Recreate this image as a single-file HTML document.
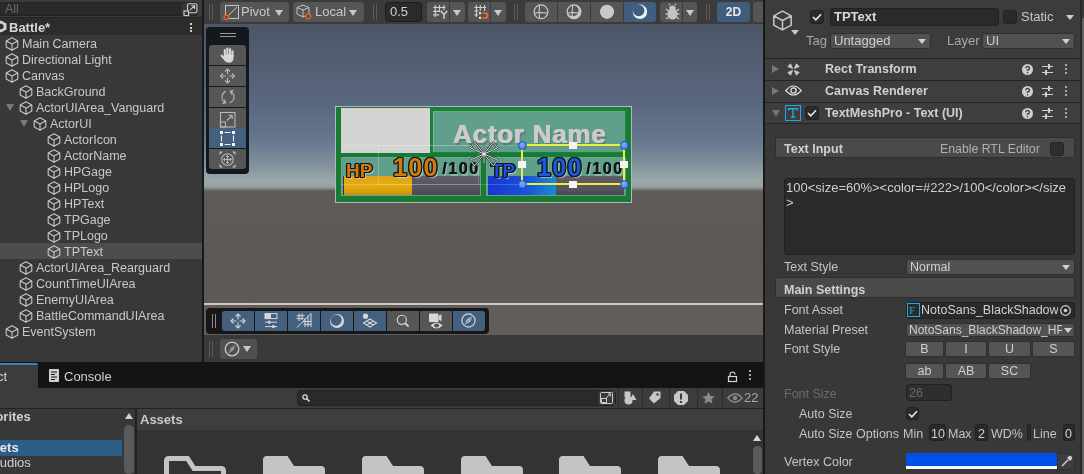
<!DOCTYPE html>
<html><head><meta charset="utf-8">
<style>
*{margin:0;padding:0;box-sizing:border-box}
html,body{width:1084px;height:474px;overflow:hidden;background:#191919;font-family:"Liberation Sans",sans-serif;color:#d2d2d2;position:relative}
.a{position:absolute}
.t{position:absolute;white-space:nowrap;font-size:12.5px;line-height:16px;will-change:transform}
svg{position:absolute;overflow:visible}
</style></head><body>
<div class="a" style="left:0px;top:0px;width:202px;height:362px;background:#383838;"></div>
<div class="a" style="left:0px;top:0px;width:202px;height:18px;background:#3c3c3c;"></div>
<div class="a" style="left:-6px;top:2px;width:187px;height:14px;background:#2a2a2a;border:1px solid #232323"></div>
<div class="t" style="left:5px;top:0px;line-height:18px;color:#6a6a6a;font-size:12.5px">All</div>
<div class="a" style="left:181px;top:2px;width:17px;height:14px;background:#363636;border-radius:0 4px 4px 0;border:1px solid #262626;border-left:none"></div>
<svg style="left:183px;top:2.5px" width="15" height="13" viewBox="0 0 15 13"><rect x="4.5" y="0.8" width="9.5" height="9" rx="1.5" fill="none" stroke="#d0d0d0" stroke-width="1.1"/><rect x="1" y="8" width="4.6" height="4.6" fill="#363636" stroke="#d0d0d0" stroke-width="1.1"/><path d="M6.8 7.2 L11.6 2.8 M8.4 2.8 H11.6 V6" fill="none" stroke="#d0d0d0" stroke-width="1.1"/></svg>
<div class="a" style="left:0px;top:17px;width:202px;height:1px;background:#232323;"></div>
<div class="a" style="left:0px;top:18px;width:202px;height:17px;background:#2c2c2c;"></div>
<svg style="left:-5px;top:20px" width="12" height="13" viewBox="0 0 12 13"><path d="M6 0.5 L11.5 3.5 V9.5 L6 12.5 L0.5 9.5 V3.5 Z" fill="#d0d0d0"/><path d="M6 3.5 L8.5 5 V8 L6 9.5 L3.5 8 V5 Z" fill="#2e2e2e"/></svg>
<div class="t" style="left:9px;top:19px;line-height:18px;font-weight:bold;font-size:13px;color:#d6d6d6">Battle*</div>
<div class="a" style="left:189.5px;top:23.0px;width:2px;height:2px;background:#d0d0d0;"></div>
<div class="a" style="left:189.5px;top:26.6px;width:2px;height:2px;background:#d0d0d0;"></div>
<div class="a" style="left:189.5px;top:30.2px;width:2px;height:2px;background:#d0d0d0;"></div>
<svg style="left:5px;top:37px" width="14" height="14" viewBox="0 0 14 14"><path d="M7 0.8 L12.8 3.9 V10.1 L7 13.2 L1.2 10.1 V3.9 Z M1.2 3.9 L7 7 L12.8 3.9 M7 7 V13.2" fill="none" stroke="#c6c6c6" stroke-width="1.1" stroke-linejoin="round"/></svg>
<div class="t" style="left:22px;top:36px;line-height:16px;font-size:12.5px;color:#c8c8c8">Main Camera</div>
<svg style="left:5px;top:53px" width="14" height="14" viewBox="0 0 14 14"><path d="M7 0.8 L12.8 3.9 V10.1 L7 13.2 L1.2 10.1 V3.9 Z M1.2 3.9 L7 7 L12.8 3.9 M7 7 V13.2" fill="none" stroke="#c6c6c6" stroke-width="1.1" stroke-linejoin="round"/></svg>
<div class="t" style="left:22px;top:52px;line-height:16px;font-size:12.5px;color:#c8c8c8">Directional Light</div>
<svg style="left:5px;top:69px" width="14" height="14" viewBox="0 0 14 14"><path d="M7 0.8 L12.8 3.9 V10.1 L7 13.2 L1.2 10.1 V3.9 Z M1.2 3.9 L7 7 L12.8 3.9 M7 7 V13.2" fill="none" stroke="#c6c6c6" stroke-width="1.1" stroke-linejoin="round"/></svg>
<svg style="left:-8px;top:72px" width="8" height="7" viewBox="0 0 8 7"><path d="M0 0 H8 L4.0 7 Z" fill="#7a7a7a"/></svg>
<div class="t" style="left:22px;top:68px;line-height:16px;font-size:12.5px;color:#c8c8c8">Canvas</div>
<svg style="left:19px;top:85px" width="14" height="14" viewBox="0 0 14 14"><path d="M7 0.8 L12.8 3.9 V10.1 L7 13.2 L1.2 10.1 V3.9 Z M1.2 3.9 L7 7 L12.8 3.9 M7 7 V13.2" fill="none" stroke="#c6c6c6" stroke-width="1.1" stroke-linejoin="round"/></svg>
<div class="t" style="left:36px;top:84px;line-height:16px;font-size:12.5px;color:#c8c8c8">BackGround</div>
<svg style="left:19px;top:101px" width="14" height="14" viewBox="0 0 14 14"><path d="M7 0.8 L12.8 3.9 V10.1 L7 13.2 L1.2 10.1 V3.9 Z M1.2 3.9 L7 7 L12.8 3.9 M7 7 V13.2" fill="none" stroke="#c6c6c6" stroke-width="1.1" stroke-linejoin="round"/></svg>
<svg style="left:6px;top:104px" width="8" height="7" viewBox="0 0 8 7"><path d="M0 0 H8 L4.0 7 Z" fill="#7a7a7a"/></svg>
<div class="t" style="left:36px;top:100px;line-height:16px;font-size:12.5px;color:#c8c8c8">ActorUIArea_Vanguard</div>
<svg style="left:33px;top:117px" width="14" height="14" viewBox="0 0 14 14"><path d="M7 0.8 L12.8 3.9 V10.1 L7 13.2 L1.2 10.1 V3.9 Z M1.2 3.9 L7 7 L12.8 3.9 M7 7 V13.2" fill="none" stroke="#c6c6c6" stroke-width="1.1" stroke-linejoin="round"/></svg>
<svg style="left:20px;top:120px" width="8" height="7" viewBox="0 0 8 7"><path d="M0 0 H8 L4.0 7 Z" fill="#7a7a7a"/></svg>
<div class="t" style="left:50px;top:116px;line-height:16px;font-size:12.5px;color:#c8c8c8">ActorUI</div>
<svg style="left:47px;top:133px" width="14" height="14" viewBox="0 0 14 14"><path d="M7 0.8 L12.8 3.9 V10.1 L7 13.2 L1.2 10.1 V3.9 Z M1.2 3.9 L7 7 L12.8 3.9 M7 7 V13.2" fill="none" stroke="#c6c6c6" stroke-width="1.1" stroke-linejoin="round"/></svg>
<div class="t" style="left:64px;top:132px;line-height:16px;font-size:12.5px;color:#c8c8c8">ActorIcon</div>
<svg style="left:47px;top:149px" width="14" height="14" viewBox="0 0 14 14"><path d="M7 0.8 L12.8 3.9 V10.1 L7 13.2 L1.2 10.1 V3.9 Z M1.2 3.9 L7 7 L12.8 3.9 M7 7 V13.2" fill="none" stroke="#c6c6c6" stroke-width="1.1" stroke-linejoin="round"/></svg>
<div class="t" style="left:64px;top:148px;line-height:16px;font-size:12.5px;color:#c8c8c8">ActorName</div>
<svg style="left:47px;top:165px" width="14" height="14" viewBox="0 0 14 14"><path d="M7 0.8 L12.8 3.9 V10.1 L7 13.2 L1.2 10.1 V3.9 Z M1.2 3.9 L7 7 L12.8 3.9 M7 7 V13.2" fill="none" stroke="#c6c6c6" stroke-width="1.1" stroke-linejoin="round"/></svg>
<div class="t" style="left:64px;top:164px;line-height:16px;font-size:12.5px;color:#c8c8c8">HPGage</div>
<svg style="left:47px;top:181px" width="14" height="14" viewBox="0 0 14 14"><path d="M7 0.8 L12.8 3.9 V10.1 L7 13.2 L1.2 10.1 V3.9 Z M1.2 3.9 L7 7 L12.8 3.9 M7 7 V13.2" fill="none" stroke="#c6c6c6" stroke-width="1.1" stroke-linejoin="round"/></svg>
<div class="t" style="left:64px;top:180px;line-height:16px;font-size:12.5px;color:#c8c8c8">HPLogo</div>
<svg style="left:47px;top:197px" width="14" height="14" viewBox="0 0 14 14"><path d="M7 0.8 L12.8 3.9 V10.1 L7 13.2 L1.2 10.1 V3.9 Z M1.2 3.9 L7 7 L12.8 3.9 M7 7 V13.2" fill="none" stroke="#c6c6c6" stroke-width="1.1" stroke-linejoin="round"/></svg>
<div class="t" style="left:64px;top:196px;line-height:16px;font-size:12.5px;color:#c8c8c8">HPText</div>
<svg style="left:47px;top:213px" width="14" height="14" viewBox="0 0 14 14"><path d="M7 0.8 L12.8 3.9 V10.1 L7 13.2 L1.2 10.1 V3.9 Z M1.2 3.9 L7 7 L12.8 3.9 M7 7 V13.2" fill="none" stroke="#c6c6c6" stroke-width="1.1" stroke-linejoin="round"/></svg>
<div class="t" style="left:64px;top:212px;line-height:16px;font-size:12.5px;color:#c8c8c8">TPGage</div>
<svg style="left:47px;top:229px" width="14" height="14" viewBox="0 0 14 14"><path d="M7 0.8 L12.8 3.9 V10.1 L7 13.2 L1.2 10.1 V3.9 Z M1.2 3.9 L7 7 L12.8 3.9 M7 7 V13.2" fill="none" stroke="#c6c6c6" stroke-width="1.1" stroke-linejoin="round"/></svg>
<div class="t" style="left:64px;top:228px;line-height:16px;font-size:12.5px;color:#c8c8c8">TPLogo</div>
<div class="a" style="left:0px;top:243px;width:202px;height:16px;background:#4d4d4d;"></div>
<svg style="left:47px;top:245px" width="14" height="14" viewBox="0 0 14 14"><path d="M7 0.8 L12.8 3.9 V10.1 L7 13.2 L1.2 10.1 V3.9 Z M1.2 3.9 L7 7 L12.8 3.9 M7 7 V13.2" fill="none" stroke="#c6c6c6" stroke-width="1.1" stroke-linejoin="round"/></svg>
<div class="t" style="left:64px;top:244px;line-height:16px;font-size:12.5px;color:#c8c8c8">TPText</div>
<svg style="left:19px;top:261px" width="14" height="14" viewBox="0 0 14 14"><path d="M7 0.8 L12.8 3.9 V10.1 L7 13.2 L1.2 10.1 V3.9 Z M1.2 3.9 L7 7 L12.8 3.9 M7 7 V13.2" fill="none" stroke="#c6c6c6" stroke-width="1.1" stroke-linejoin="round"/></svg>
<div class="t" style="left:36px;top:260px;line-height:16px;font-size:12.5px;color:#c8c8c8">ActorUIArea_Rearguard</div>
<svg style="left:19px;top:277px" width="14" height="14" viewBox="0 0 14 14"><path d="M7 0.8 L12.8 3.9 V10.1 L7 13.2 L1.2 10.1 V3.9 Z M1.2 3.9 L7 7 L12.8 3.9 M7 7 V13.2" fill="none" stroke="#c6c6c6" stroke-width="1.1" stroke-linejoin="round"/></svg>
<div class="t" style="left:36px;top:276px;line-height:16px;font-size:12.5px;color:#c8c8c8">CountTimeUIArea</div>
<svg style="left:19px;top:293px" width="14" height="14" viewBox="0 0 14 14"><path d="M7 0.8 L12.8 3.9 V10.1 L7 13.2 L1.2 10.1 V3.9 Z M1.2 3.9 L7 7 L12.8 3.9 M7 7 V13.2" fill="none" stroke="#c6c6c6" stroke-width="1.1" stroke-linejoin="round"/></svg>
<div class="t" style="left:36px;top:292px;line-height:16px;font-size:12.5px;color:#c8c8c8">EnemyUIArea</div>
<svg style="left:19px;top:309px" width="14" height="14" viewBox="0 0 14 14"><path d="M7 0.8 L12.8 3.9 V10.1 L7 13.2 L1.2 10.1 V3.9 Z M1.2 3.9 L7 7 L12.8 3.9 M7 7 V13.2" fill="none" stroke="#c6c6c6" stroke-width="1.1" stroke-linejoin="round"/></svg>
<div class="t" style="left:36px;top:308px;line-height:16px;font-size:12.5px;color:#c8c8c8">BattleCommandUIArea</div>
<svg style="left:5px;top:325px" width="14" height="14" viewBox="0 0 14 14"><path d="M7 0.8 L12.8 3.9 V10.1 L7 13.2 L1.2 10.1 V3.9 Z M1.2 3.9 L7 7 L12.8 3.9 M7 7 V13.2" fill="none" stroke="#c6c6c6" stroke-width="1.1" stroke-linejoin="round"/></svg>
<div class="t" style="left:22px;top:324px;line-height:16px;font-size:12.5px;color:#c8c8c8">EventSystem</div>
<div class="a" style="left:202px;top:0px;width:2px;height:362px;background:#191919;"></div>
<div class="a" style="left:204px;top:24px;width:559px;height:311px;overflow:hidden">
<div class="a" style="left:0;top:0;width:559px;height:311px;background:linear-gradient(180deg,#4c5666 0px,#5a6780 80px,#67778f 116px,#7a8b98 135px,#9aa8a8 157px,#96a2a2 163px,#6c6c6a 166px,#5e5b58 167.5px,#5c5956 230px,#5f5b57 311px)"></div>
<div class="a" style="left:0px;top:279px;width:559px;height:2px;background:#c9c9c7;"></div>
<div class="a" style="left:0px;top:281px;width:559px;height:30px;background:#625d58;"></div>
</div>
<div class="a" style="left:204px;top:0px;width:559px;height:24px;background:#3b3b3b;"></div>
<div class="a" style="left:209px;top:4px;width:1px;height:16px;background:#5c5c5c;"></div><div class="a" style="left:212px;top:4px;width:1px;height:16px;background:#5c5c5c;"></div>
<div class="a" style="left:220px;top:2px;width:69px;height:20px;background:#555555;border-radius:3px;"></div>
<svg style="left:223px;top:5px" width="16" height="15" viewBox="0 0 16 15"><rect x="2.5" y="0.5" width="13" height="13" fill="none" stroke="#c4c4c4"/><path d="M5 11 L14 2" stroke="#c4c4c4"/><circle cx="3.3" cy="12.3" r="2.3" fill="#555" stroke="#f05a28" stroke-width="1.3"/></svg>
<div class="t" style="left:241px;top:2px;line-height:20px;font-size:13px;color:#c8c8c8">Pivot</div>
<svg style="left:275px;top:10px" width="8" height="6" viewBox="0 0 8 6"><path d="M0 0 H8 L4.0 6 Z" fill="#c8c8c8"/></svg>
<div class="a" style="left:293px;top:2px;width:71px;height:20px;background:#555555;border-radius:3px;"></div>
<svg style="left:296px;top:4px" width="17" height="16" viewBox="0 0 17 16"><path d="M7 1 L13 3.5 V10 L7 13 L1 10 V3.5 Z M1 3.5 L7 6 L13 3.5 M7 6 V13" fill="none" stroke="#c4c4c4" stroke-linejoin="round"/><circle cx="12.3" cy="12.3" r="2.5" fill="#555" stroke="#f05a28" stroke-width="1.3"/></svg>
<div class="t" style="left:315px;top:2px;line-height:20px;font-size:13px;color:#c8c8c8">Local</div>
<svg style="left:349px;top:10px" width="8" height="6" viewBox="0 0 8 6"><path d="M0 0 H8 L4.0 6 Z" fill="#c8c8c8"/></svg>
<div class="a" style="left:373px;top:4px;width:1px;height:16px;background:#5c5c5c;"></div><div class="a" style="left:376px;top:4px;width:1px;height:16px;background:#5c5c5c;"></div>
<div class="a" style="left:385px;top:2px;width:37px;height:20px;background:#2a2a2a;border-radius:3px;border:1px solid #1e1e1e"></div>
<div class="t" style="left:390px;top:2px;line-height:20px;font-size:13px;color:#d0d0d0">0.5</div>
<div class="a" style="left:427px;top:2px;width:22px;height:20px;background:#555;border-radius:3px 0 0 3px"></div>
<div class="a" style="left:450px;top:2px;width:15px;height:20px;background:#555;border-radius:0 3px 3px 0"></div>
<svg style="left:425px;top:0px" width="25" height="22" viewBox="0 0 25 22"><path d="M10.2 5 V17 M14.5 5 V11 M18.8 5 V10 M8.2 7.5 H20.4 M8.2 11.4 H15 M8.2 14.9 H14" stroke="#d0d0d0" stroke-width="1.1"/><path d="M15.8 11 L19 14.5 L22.2 11 M19 14.5 V18.8" stroke="#d0d0d0" stroke-width="1.5" fill="none"/></svg>
<svg style="left:453px;top:10px" width="8" height="6" viewBox="0 0 8 6"><path d="M0 0 H8 L4.0 6 Z" fill="#c8c8c8"/></svg>
<div class="a" style="left:468px;top:2px;width:22px;height:20px;background:#555;border-radius:3px 0 0 3px"></div>
<div class="a" style="left:491px;top:2px;width:15px;height:20px;background:#555;border-radius:0 3px 3px 0"></div>
<svg style="left:466px;top:0px" width="25" height="22" viewBox="0 0 25 22"><path d="M10.4 5 V17 M14.3 5 V11 M18.6 5 V11 M8.3 7.5 H20 M8.3 11 H12.5 M8.3 15 H12" stroke="#d0d0d0" stroke-width="1.1"/><rect x="13" y="12.2" width="2" height="2" fill="#f4f4f4"/><rect x="13" y="16.8" width="2" height="2" fill="#f4f4f4"/><path d="M16.3 13 H19 A2.2 2.2 0 0 1 19 18 H16.3" stroke="#f26a30" stroke-width="1.7" fill="none"/></svg>
<svg style="left:494px;top:10px" width="8" height="6" viewBox="0 0 8 6"><path d="M0 0 H8 L4.0 6 Z" fill="#c8c8c8"/></svg>
<div class="a" style="left:514px;top:4px;width:1px;height:16px;background:#5c5c5c;"></div><div class="a" style="left:517px;top:4px;width:1px;height:16px;background:#5c5c5c;"></div>
<div class="a" style="left:525px;top:2px;width:32px;height:20px;background:#555;border-radius:3px 0 0 3px"></div>
<div class="a" style="left:558px;top:2px;width:32px;height:20px;background:#555;border-radius:0"></div>
<div class="a" style="left:591px;top:2px;width:32px;height:20px;background:#555;border-radius:0"></div>
<div class="a" style="left:624px;top:2px;width:32px;height:20px;background:#3f5d7f;border-radius:0 3px 3px 0"></div>
<svg style="left:533px;top:4px" width="16" height="16" viewBox="0 0 16 16"><circle cx="8" cy="7.8" r="6.9" fill="none" stroke="#c8c8c8" stroke-width="1.2"/><path d="M6.6 1 Q5.6 8 6.6 14.6 M1.2 9 Q8 8.2 14.8 9" stroke="#c8c8c8" stroke-width="1.1" fill="none"/></svg>
<svg style="left:566px;top:4px" width="16" height="16" viewBox="0 0 16 16"><circle cx="8" cy="7.8" r="6.9" fill="#c8c8c8"/><circle cx="7" cy="6.6" r="5.6" fill="#555"/><path d="M6.6 1 Q5.6 8 6.6 14.6 M1.2 9 Q8 8.2 14.8 9" stroke="#c8c8c8" stroke-width="1.1" fill="none"/><circle cx="8" cy="7.8" r="6.9" fill="none" stroke="#c8c8c8" stroke-width="1.2"/></svg>
<svg style="left:599px;top:4px" width="16" height="16" viewBox="0 0 16 16"><circle cx="8" cy="7.8" r="7.1" fill="#c8c8c8"/></svg>
<svg style="left:632px;top:4px" width="16" height="16" viewBox="0 0 16 16"><circle cx="8" cy="7.8" r="7.2" fill="#f2f2f2"/><circle cx="6.7" cy="6.5" r="5.7" fill="#3f5d7f"/></svg>
<div class="a" style="left:660px;top:2px;width:22px;height:20px;background:#555;border-radius:3px 0 0 3px"></div>
<div class="a" style="left:683px;top:2px;width:14px;height:20px;background:#555;border-radius:0 3px 3px 0"></div>
<svg style="left:664px;top:4px" width="17" height="16" viewBox="0 0 17 16"><ellipse cx="8.5" cy="10" rx="5" ry="5.5" fill="#c4c4c4"/><ellipse cx="8.5" cy="4" rx="3.2" ry="2.6" fill="#c4c4c4"/><path d="M6 1 L5 0 M11 1 L12 0 M2 5 L5 7.5 M15 5 L12 7.5 M1.5 10 H4 M15.5 10 H13 M2 15 L5 12.5 M15 15 L12 12.5" stroke="#c4c4c4" stroke-width="1.4"/></svg>
<svg style="left:686px;top:10px" width="8" height="6" viewBox="0 0 8 6"><path d="M0 0 H8 L4.0 6 Z" fill="#c8c8c8"/></svg>
<div class="a" style="left:706px;top:4px;width:1px;height:16px;background:#5c5c5c;"></div><div class="a" style="left:709px;top:4px;width:1px;height:16px;background:#5c5c5c;"></div>
<div class="a" style="left:717px;top:2px;width:33px;height:20px;background:#3f5d7f;border-radius:3px"></div>
<div class="t" style="left:717px;top:2px;line-height:20px;font-size:12px;font-weight:bold;color:#e8e8e8;width:33px;text-align:center">2D</div>
<div class="a" style="left:753px;top:2px;width:10px;height:20px;background:#555;border-radius:3px 0 0 3px"></div>
<div class="a" style="left:206px;top:27px;width:43px;height:147px;background:#14171b;border-radius:4px"></div>
<div class="a" style="left:220px;top:33px;width:16px;height:1px;background:#9a9a9a;"></div>
<div class="a" style="left:220px;top:36px;width:16px;height:1px;background:#9a9a9a;"></div>
<div class="a" style="left:209px;top:45px;width:37px;height:20px;background:#565656;border-radius:3px 3px 0 0"></div>
<div class="a" style="left:209px;top:66px;width:37px;height:20px;background:#565656;border-radius:0"></div>
<div class="a" style="left:209px;top:87px;width:37px;height:20px;background:#565656;border-radius:0"></div>
<div class="a" style="left:209px;top:108px;width:37px;height:20px;background:#565656;border-radius:0"></div>
<div class="a" style="left:209px;top:128px;width:37px;height:20px;background:#44607f;border-radius:0"></div>
<div class="a" style="left:209px;top:149px;width:37px;height:20px;background:#565656;border-radius:0 0 3px 3px"></div>
<svg style="left:220px;top:46.5px" width="15" height="16" viewBox="0 0 15 16"><g stroke="#d8d8d8" stroke-width="2.1" stroke-linecap="round"><path d="M4.8 8 V3"/><path d="M7.4 8 V1.6"/><path d="M10 8 V2.2"/><path d="M12.5 9 V4.2"/><path d="M1.6 8.6 L4.6 12.2"/></g><path d="M3.8 7.5 H13.5 V11 Q13.5 15.8 8.6 15.8 Q5.6 15.8 4 13 Z" fill="#d8d8d8"/></svg>
<svg style="left:220px;top:48px" width="15" height="15" viewBox="0 0 15 15"></svg>
<svg style="left:220px;top:68px" width="15" height="16" viewBox="0 0 15 16"><path d="M7.5 1 V15 M0.5 8 H14.5" stroke="#b8b8b8" stroke-width="1.1"/><path d="M5 3.5 L7.5 1 L10 3.5 M5 12.5 L7.5 15 L10 12.5 M3 5.5 L0.5 8 L3 10.5 M12 5.5 L14.5 8 L12 10.5" stroke="#b8b8b8" stroke-width="1.1" fill="none"/><rect x="6" y="6.5" width="3" height="3" fill="#565656"/></svg>
<svg style="left:220px;top:89px" width="16" height="16" viewBox="0 0 16 16"><path d="M5.95 2.36 A6 6 0 0 0 5.75 13.56 M10.05 13.64 A6 6 0 0 0 10.25 2.44" stroke="#b8b8b8" stroke-width="1.1" fill="none"/><path d="M2.52 14.63 L5.75 13.56 L4.17 10.55 M13.48 1.37 L10.25 2.44 L11.83 5.45" stroke="#b8b8b8" stroke-width="1.1" fill="none"/></svg>
<svg style="left:220px;top:112px" width="16" height="16" viewBox="0 0 16 16"><rect x="0.5" y="0.5" width="14.5" height="14.5" fill="none" stroke="#b8b8b8" stroke-width="1.1"/><rect x="0.5" y="10" width="5" height="5" fill="none" stroke="#b8b8b8" stroke-width="1.1"/><path d="M7 8.5 L12.2 3.3 M8.5 3.3 H12.2 V7" stroke="#b8b8b8" stroke-width="1.1" fill="none"/></svg>
<svg style="left:220px;top:131px" width="15" height="15" viewBox="0 0 15 15"><path d="M4.5 1.5 H10.5 M4.5 13.5 H10.5 M1.5 4.5 V10.5 M13.5 4.5 V10.5" stroke="#eeeeee" stroke-width="1.1"/><rect x="0" y="0" width="3" height="3" fill="#f4f4f4"/><rect x="12" y="0" width="3" height="3" fill="#f4f4f4"/><rect x="0" y="12" width="3" height="3" fill="#f4f4f4"/><rect x="12" y="12" width="3" height="3" fill="#f4f4f4"/></svg>
<svg style="left:219px;top:151px" width="17" height="17" viewBox="0 0 17 17"><circle cx="8.5" cy="8.5" r="5.8" fill="none" stroke="#b8b8b8" stroke-width="1.1"/><path d="M8.5 4.5 V12.5 M4.5 8.5 H12.5 M7 6 L8.5 4.5 L10 6 M7 11 L8.5 12.5 L10 11 M6 7 L4.5 8.5 L6 10 M11 7 L12.5 8.5 L11 10" stroke="#b8b8b8" stroke-width="1" fill="none"/><path d="M0.5 0.5 H4 L0.5 4 Z M16.5 0.5 H13 L16.5 4 Z M0.5 16.5 H4 L0.5 13 Z M16.5 16.5 H13 L16.5 13 Z" fill="#b8b8b8"/></svg>
<div class="a" style="left:206px;top:308px;width:283px;height:26px;background:#171717;border-radius:4px"></div>
<div class="a" style="left:212px;top:314px;width:1px;height:14px;background:#8a8a8a;"></div><div class="a" style="left:215px;top:314px;width:1px;height:14px;background:#8a8a8a;"></div>
<div class="a" style="left:222px;top:311px;width:32px;height:20px;background:#44607f;border-radius:3px 0 0 3px"></div>
<div class="a" style="left:255px;top:311px;width:32px;height:20px;background:#44607f;border-radius:0"></div>
<div class="a" style="left:288px;top:311px;width:32px;height:20px;background:#44607f;border-radius:0"></div>
<div class="a" style="left:321px;top:311px;width:32px;height:20px;background:#44607f;border-radius:0"></div>
<div class="a" style="left:354px;top:311px;width:32px;height:20px;background:#44607f;border-radius:0"></div>
<div class="a" style="left:387px;top:311px;width:32px;height:20px;background:#565656;border-radius:0"></div>
<div class="a" style="left:420px;top:311px;width:32px;height:20px;background:#565656;border-radius:0"></div>
<div class="a" style="left:453px;top:311px;width:32px;height:20px;background:#44607f;border-radius:0 3px 3px 0"></div>
<svg style="left:230px;top:313px" width="16" height="16" viewBox="0 0 16 16"><path d="M8 1 V15 M1 8 H15" stroke="#d8d8d8" stroke-width="1.1"/><path d="M5.5 3.5 L8 1 L10.5 3.5 M5.5 12.5 L8 15 L10.5 12.5 M3.5 5.5 L1 8 L3.5 10.5 M12.5 5.5 L15 8 L12.5 10.5" stroke="#d8d8d8" stroke-width="1.1" fill="none"/><rect x="6.5" y="6.5" width="3" height="3" fill="#44607f"/></svg>
<svg style="left:264px;top:313px" width="14" height="15" viewBox="0 0 14 15"><rect x="1" y="0.6" width="12" height="5" fill="none" stroke="#d8d8d8" stroke-width="1"/><rect x="1" y="0.6" width="6" height="5" fill="#d8d8d8"/><path d="M1 9.2 H13 M1 13.6 H13" stroke="#d8d8d8" stroke-width="1"/><rect x="4.2" y="7.7" width="2.2" height="3" fill="#d8d8d8"/><rect x="8.2" y="12.1" width="2.2" height="3" fill="#d8d8d8"/></svg>
<svg style="left:296px;top:313px" width="16" height="15" viewBox="0 0 16 15"><path d="M3 0.5 V8 M6 0.5 V7 M0.5 2.8 H8.5 M0.5 5.6 H7.5 M9 5 V14 M12 2.5 V14 M15 0.5 V14 M6.5 8.5 H15 M7.5 11.3 H15 M1 14.5 L15 0.5" stroke="#d8d8d8" stroke-width="1"/></svg>
<svg style="left:329px;top:313px" width="16" height="16" viewBox="0 0 16 16"><circle cx="8" cy="8" r="7" fill="#d8d8d8"/><circle cx="7.1" cy="7.1" r="5.6" fill="#44607f"/></svg>
<svg style="left:362px;top:313px" width="16" height="15" viewBox="0 0 16 15"><circle cx="3.5" cy="3.2" r="2.6" fill="#d8d8d8"/><path d="M8 6 L14.5 10 L8 14 L1.5 10 Z M4.75 8 L11.25 12 M11.25 8 L4.75 12" stroke="#d8d8d8" stroke-width="1.1" fill="none"/></svg>
<svg style="left:396px;top:314px" width="14" height="14" viewBox="0 0 14 14"><circle cx="5.8" cy="5.8" r="4.6" fill="none" stroke="#d8d8d8" stroke-width="1.1"/><path d="M9.2 9.2 L12.6 12.6" stroke="#d8d8d8" stroke-width="1.8"/></svg>
<svg style="left:428px;top:313px" width="16" height="16" viewBox="0 0 16 16"><rect x="1" y="0.5" width="9.5" height="8.5" rx="0.8" fill="#d8d8d8"/><path d="M10.5 3 L13.5 1.2 V8.2 L10.5 6.5 Z" fill="#d8d8d8"/><path d="M2.6 12.5 Q8.6 6.5 14.6 12.5 Q8.6 18.5 2.6 12.5 Z" fill="#d8d8d8"/><ellipse cx="8.6" cy="12.5" rx="2.6" ry="2" fill="#565656"/></svg>
<svg style="left:461px;top:313px" width="16" height="16" viewBox="0 0 16 16"><circle cx="7.5" cy="7.5" r="6.6" fill="none" stroke="#d8d8d8" stroke-width="1.2"/><path d="M12 2.5 L9 8.5 L3 12.5 L6 6.5 Z" fill="#d8d8d8"/><path d="M3 12.5 L12 2.5" stroke="#44607f" stroke-width="0.9"/></svg>
<div class="a" style="left:204px;top:335px;width:559px;height:27px;background:#3a3a3a;"></div>
<div class="a" style="left:209px;top:341px;width:1px;height:16px;background:#5a5a5a;"></div><div class="a" style="left:212px;top:341px;width:1px;height:16px;background:#5a5a5a;"></div>
<div class="a" style="left:220px;top:339px;width:37px;height:20px;background:#505050;border-radius:3px;"></div>
<svg style="left:224px;top:341px" width="16" height="16" viewBox="0 0 16 16"><circle cx="8" cy="8" r="6.8" fill="none" stroke="#c8c8c8" stroke-width="1.3"/><path d="M12 3 L9 9 L3.5 13 L7 7 Z" fill="#c8c8c8"/><path d="M3.5 13 L12 3" stroke="#505050" stroke-width="0.9"/></svg>
<svg style="left:243px;top:346px" width="8" height="6" viewBox="0 0 8 6"><path d="M0 0 H8 L4.0 6 Z" fill="#c8c8c8"/></svg>
<div class="a" style="left:763px;top:0px;width:2px;height:362px;background:#191919;"></div>
<div class="a" style="left:335px;top:106px;width:297px;height:97px;background:transparent;border:1px solid #b4b6bc"></div>
<div class="a" style="left:336px;top:107px;width:295px;height:95px;background:#187a33;border-radius:3px"></div>
<div class="a" style="left:341px;top:108px;width:89px;height:44.5px;background:#d4d4d4;"></div>
<div class="a" style="left:431px;top:108px;width:196px;height:45px;background:#188436;"></div>
<div class="a" style="left:433px;top:111px;width:192px;height:41px;background:#5f9f8c;border-left:1px solid #78b89c;border-top:1px solid #6aa890"></div>
<div class="a" style="left:341px;top:157px;width:140px;height:39px;background:#5f9f8c;border-left:1px solid #6aa890;border-top:1px solid #6aa890"></div>
<div class="a" style="left:486px;top:157px;width:140px;height:39px;background:#5f9f8c;border-left:1px solid #6aa890;border-top:1px solid #6aa890"></div>
<div class="a" style="left:343px;top:176px;width:137px;height:19px;background:linear-gradient(180deg,#5e5c64,#57545e 70%,#4a4656);"></div>
<div class="a" style="left:343px;top:176px;width:69px;height:19px;background:linear-gradient(180deg,#e0a418,#e2ac12 50%,#d8a008 80%,#c8900c);border-left:1px solid #3a3050"></div>
<div class="a" style="left:488px;top:176px;width:136px;height:19px;background:linear-gradient(180deg,#5e5c64,#57545e 70%,#4a4656);"></div>
<div class="a" style="left:488px;top:176px;width:68px;height:19px;background:linear-gradient(90deg,#1638d0,#1a50dc 55%,#1a8ad0);"></div>
<div class="a" style="left:341px;top:184px;width:285px;height:1px;background:rgba(255,255,255,0.18);"></div>
<div class="a" style="left:341px;top:145px;width:182px;height:1px;background:rgba(255,255,255,0.18);"></div>
<div class="t" style="left:453px;top:119px;line-height:30px;font-size:26px;font-weight:bold;color:#cbcbcb;letter-spacing:0.75px;text-shadow:0.5px 0 0 #cbcbcb,-0.3px 0 0 #cbcbcb,1.5px 1.5px 1px #5a7a70">Actor Name</div>
<div class="t" style="left:346px;top:159px;line-height:24px;font-size:19px;font-weight:bold;color:#cf7a10;text-shadow:-1px -1px 0 #151515,1px -1px 0 #151515,-1px 1px 0 #151515,1px 1px 0 #151515,0 1.3px 0 #151515,0 -1.3px 0 #151515,1.3px 0 0 #151515,-1.3px 0 0 #151515,2px 2px 1px rgba(230,230,230,0.6)">HP</div>
<div class="t" style="left:393px;top:152px;line-height:30px;font-size:25px;font-weight:bold;color:#cf7a10;letter-spacing:1.4px;text-shadow:-1px -1px 0 #151515,1px -1px 0 #151515,-1px 1px 0 #151515,1px 1px 0 #151515,0 1.3px 0 #151515,0 -1.3px 0 #151515,1.3px 0 0 #151515,-1.3px 0 0 #151515,2px 2px 1px rgba(230,230,230,0.6)">100</div>
<div class="t" style="left:442px;top:160px;line-height:18px;font-size:16px;font-weight:bold;color:#141414;letter-spacing:1.6px;text-shadow:0.5px 0 0 #141414,1.5px 1.5px 1px rgba(220,220,220,0.45)">/100</div>
<div class="t" style="left:491px;top:159px;line-height:24px;font-size:19px;font-weight:bold;color:#1a50d8;text-shadow:-1px -1px 0 #151515,1px -1px 0 #151515,-1px 1px 0 #151515,1px 1px 0 #151515,0 1.3px 0 #151515,0 -1.3px 0 #151515,1.3px 0 0 #151515,-1.3px 0 0 #151515,2px 2px 1px rgba(230,230,230,0.6)">TP</div>
<div class="t" style="left:537px;top:152px;line-height:30px;font-size:25px;font-weight:bold;color:#1a58dc;letter-spacing:1.4px;text-shadow:-1px -1px 0 #151515,1px -1px 0 #151515,-1px 1px 0 #151515,1px 1px 0 #151515,0 1.3px 0 #151515,0 -1.3px 0 #151515,1.3px 0 0 #151515,-1.3px 0 0 #151515,2px 2px 1px rgba(230,230,230,0.6)">100</div>
<div class="t" style="left:586px;top:160px;line-height:18px;font-size:16px;font-weight:bold;color:#141414;letter-spacing:1.6px;text-shadow:0.5px 0 0 #141414,1.5px 1.5px 1px rgba(220,220,220,0.45)">/100</div>
<div class="a" style="left:378px;top:145px;width:101px;height:40px;background:transparent;border:1px solid rgba(255,255,255,0.2)"></div>
<div class="a" style="left:521px;top:144px;width:104px;height:41px;background:transparent;border:2px solid #f0ec40"></div>
<div class="a" style="left:517.5px;top:140.5px;width:9px;height:9px;border-radius:50%;background:radial-gradient(circle at 40% 35%,#80b4ff,#2c6ee6);border:1px solid #2050b0"></div>
<div class="a" style="left:619.5px;top:140.5px;width:9px;height:9px;border-radius:50%;background:radial-gradient(circle at 40% 35%,#80b4ff,#2c6ee6);border:1px solid #2050b0"></div>
<div class="a" style="left:517.5px;top:179.5px;width:9px;height:9px;border-radius:50%;background:radial-gradient(circle at 40% 35%,#80b4ff,#2c6ee6);border:1px solid #2050b0"></div>
<div class="a" style="left:619.5px;top:179.5px;width:9px;height:9px;border-radius:50%;background:radial-gradient(circle at 40% 35%,#80b4ff,#2c6ee6);border:1px solid #2050b0"></div>
<div class="a" style="left:569px;top:141.5px;width:8px;height:7px;background:#f4f4f4;"></div>
<div class="a" style="left:518px;top:160.5px;width:8px;height:7px;background:#f4f4f4;"></div>
<div class="a" style="left:620px;top:160.5px;width:8px;height:7px;background:#f4f4f4;"></div>
<div class="a" style="left:569px;top:180.5px;width:8px;height:7px;background:#f4f4f4;"></div>
<svg style="left:483.5px;top:154px" width="1" height="1" viewBox="0 0 1 1"><path d="M0 0 L13.70 -6.10 L9.23 -11.82 Z M0 0 L-13.70 6.10 L-9.23 11.82 Z M0 0 L-9.23 -11.82 L-13.70 -6.10 Z M0 0 L9.23 11.82 L13.70 6.10 Z M0 -9 V9" fill="none" stroke="#222" stroke-width="1.9" stroke-linejoin="bevel"/><path d="M0 0 L13.70 -6.10 L9.23 -11.82 Z M0 0 L-13.70 6.10 L-9.23 11.82 Z M0 0 L-9.23 -11.82 L-13.70 -6.10 Z M0 0 L9.23 11.82 L13.70 6.10 Z M0 -9 V9" fill="none" stroke="#f4f4f4" stroke-width="0.9" stroke-linejoin="bevel"/></svg>
<div class="a" style="left:0px;top:362px;width:763px;height:112px;background:#141414;"></div>
<div class="a" style="left:-4px;top:363px;width:42px;height:25px;background:#3c3c3c;border-radius:0 4px 0 0"></div>
<div class="a" style="left:-4px;top:363px;width:42px;height:2px;background:#3d7fc4;border-radius:0 4px 0 0"></div>
<div class="t" style="left:-3px;top:367px;line-height:20px;font-size:13px;color:#d0d0d0">ct</div>
<svg style="left:49px;top:369px" width="10" height="13" viewBox="0 0 10 13"><rect x="0" y="0" width="10" height="13" rx="1" fill="#d0d0d0"/><path d="M2 3 H8 M2 5.5 H6 M2 8 H8 M2 10.5 H6" stroke="#141414" stroke-width="1.2"/></svg>
<div class="t" style="left:64px;top:367px;line-height:20px;font-size:13px;color:#d0d0d0">Console</div>
<svg style="left:728px;top:372px" width="9" height="10" viewBox="0 0 9 10"><rect x="0.5" y="4.5" width="8" height="5" fill="none" stroke="#d8d8d8" stroke-width="1.2"/><path d="M2 4.5 V2.5 A2.5 2.5 0 0 1 7 2.5" fill="none" stroke="#d8d8d8" stroke-width="1.2"/></svg>
<div class="a" style="left:749px;top:370px;width:2px;height:2px;background:#d8d8d8;border-radius:1px"></div>
<div class="a" style="left:749px;top:374px;width:2px;height:2px;background:#d8d8d8;border-radius:1px"></div>
<div class="a" style="left:749px;top:378px;width:2px;height:2px;background:#d8d8d8;border-radius:1px"></div>
<div class="a" style="left:0px;top:388px;width:763px;height:20px;background:#3c3c3c;"></div>
<div class="a" style="left:297px;top:390px;width:319px;height:16px;background:#2a2a2a;border-radius:4px;border:1px solid #212121"></div>
<svg style="left:302px;top:394px" width="8" height="8" viewBox="0 0 8 8"><circle cx="3" cy="3" r="2.2" fill="none" stroke="#d8d8d8" stroke-width="1.3"/><path d="M4.5 4.5 L7.5 7.5" stroke="#d8d8d8" stroke-width="1.6"/></svg>
<div class="a" style="left:597px;top:391px;width:18px;height:14px;background:#3a3a3a;border-left:1px solid #232323"></div>
<svg style="left:600px;top:392px" width="13" height="12" viewBox="0 0 13 12"><rect x="0.5" y="0.5" width="12" height="11" rx="1" fill="none" stroke="#c8c8c8"/><rect x="1.5" y="6.5" width="5" height="4" fill="none" stroke="#c8c8c8"/><path d="M6 6 L10.5 2 M8 2 H10.5 V4.5" fill="none" stroke="#c8c8c8"/></svg>
<div class="a" style="left:618px;top:388px;width:1px;height:20px;background:#2a2a2a;"></div>
<div class="a" style="left:642px;top:388px;width:1px;height:20px;background:#2a2a2a;"></div>
<div class="a" style="left:669px;top:388px;width:1px;height:20px;background:#2a2a2a;"></div>
<div class="a" style="left:697px;top:388px;width:1px;height:20px;background:#2a2a2a;"></div>
<div class="a" style="left:722px;top:388px;width:1px;height:20px;background:#2a2a2a;"></div>
<svg style="left:624px;top:391px" width="13" height="14" viewBox="0 0 13 14"><rect x="0.5" y="0.5" width="6" height="6" fill="#c8c8c8"/><path d="M9 3 L12.5 9 H5.5 Z" fill="#c8c8c8"/><circle cx="4.5" cy="9.5" r="4" fill="#c8c8c8"/></svg>
<svg style="left:649px;top:391px" width="12" height="13" viewBox="0 0 12 13"><path d="M5 0.5 H11.5 V7 L5 12.5 L0 7.5 Z" fill="#c8c8c8" transform="rotate(0)"/><circle cx="8.5" cy="3.5" r="1.2" fill="#3c3c3c"/></svg>
<svg style="left:674px;top:391px" width="14" height="14" viewBox="0 0 14 14"><path d="M4 0 H10 L14 4 V10 L10 14 H4 L0 10 V4 Z" fill="#c8c8c8"/><rect x="6" y="2.5" width="2" height="6" fill="#3c3c3c"/><rect x="6" y="10" width="2" height="2" fill="#3c3c3c"/></svg>
<svg style="left:702px;top:392px" width="13" height="12" viewBox="0 0 13 12"><path d="M6.5 0 L8.4 4 L12.8 4.4 L9.5 7.3 L10.5 11.7 L6.5 9.4 L2.5 11.7 L3.5 7.3 L0.2 4.4 L4.6 4 Z" fill="#8a8a8a"/></svg>
<svg style="left:727px;top:393px" width="16" height="10" viewBox="0 0 16 10"><path d="M0.8 5 Q8 -3 15.2 5 Q8 13 0.8 5 Z" fill="none" stroke="#8a8a8a" stroke-width="1.3"/><circle cx="8" cy="5" r="2.2" fill="#8a8a8a"/></svg>
<div class="t" style="left:744px;top:389px;line-height:18px;font-size:13px;color:#a8a8a8">22</div>
<div class="a" style="left:0px;top:408px;width:763px;height:1px;background:#232323;"></div>
<div class="a" style="left:0px;top:409px;width:123px;height:65px;background:#383838;"></div>
<div class="t" style="left:-27px;top:408px;line-height:17px;font-size:13px;font-weight:bold;color:#d0d0d0">Favorites</div>
<div class="a" style="left:0px;top:440px;width:122px;height:16px;background:#2c5d87;"></div>
<div class="t" style="left:-24px;top:440px;line-height:16px;font-size:13px;font-weight:bold;color:#e8e8e8">Assets</div>
<div class="t" style="left:-9px;top:455px;line-height:16px;font-size:13px;color:#d0d0d0">Audios</div>
<div class="a" style="left:123px;top:409px;width:12px;height:65px;background:#383838;"></div>
<svg style="left:125px;top:413px" width="8" height="6" viewBox="0 0 8 6"><path d="M0 6 H8 L4.0 0 Z" fill="#d0d0d0"/></svg>
<div class="a" style="left:124px;top:425px;width:10px;height:49px;background:#5a5a5a;border-radius:5px"></div>
<div class="a" style="left:135px;top:409px;width:2px;height:65px;background:#232323;"></div>
<div class="a" style="left:137px;top:409px;width:626px;height:21px;background:#3e3e3e;"></div>
<div class="t" style="left:140px;top:410px;line-height:19px;font-size:13px;font-weight:bold;color:#c8c8c8">Assets</div>
<div class="a" style="left:137px;top:430px;width:626px;height:44px;background:#333333;"></div>
<svg style="left:164px;top:456px" width="62" height="40" viewBox="0 0 62 40"><path d="M2.5 40 V5 Q2.5 2.5 5 2.5 H23.5 L30 12.5 H57 Q59.5 12.5 59.5 15 V40" fill="none" stroke="#c4c4c4" stroke-width="5"/></svg>
<svg style="left:263px;top:456px" width="62" height="40" viewBox="0 0 62 40"><path d="M0 4 Q0 0 4 0 H24.5 L31 10 H58 Q62 10 62 14 V40 H0 Z" fill="#c4c4c4"/></svg>
<svg style="left:362px;top:456px" width="62" height="40" viewBox="0 0 62 40"><path d="M0 4 Q0 0 4 0 H24.5 L31 10 H58 Q62 10 62 14 V40 H0 Z" fill="#c4c4c4"/></svg>
<svg style="left:461px;top:456px" width="62" height="40" viewBox="0 0 62 40"><path d="M0 4 Q0 0 4 0 H24.5 L31 10 H58 Q62 10 62 14 V40 H0 Z" fill="#c4c4c4"/></svg>
<svg style="left:559px;top:456px" width="62" height="40" viewBox="0 0 62 40"><path d="M0 4 Q0 0 4 0 H24.5 L31 10 H58 Q62 10 62 14 V40 H0 Z" fill="#c4c4c4"/></svg>
<svg style="left:658px;top:456px" width="62" height="40" viewBox="0 0 62 40"><path d="M0 4 Q0 0 4 0 H24.5 L31 10 H58 Q62 10 62 14 V40 H0 Z" fill="#c4c4c4"/></svg>
<div class="a" style="left:752px;top:430px;width:11px;height:44px;background:#333;"></div>
<svg style="left:753px;top:435px" width="8" height="6" viewBox="0 0 8 6"><path d="M0 6 H8 L4.0 0 Z" fill="#d8d8d8"/></svg>
<div class="a" style="left:753px;top:446px;width:9px;height:28px;background:#5a5a5a;border-radius:4px"></div>
<div class="a" style="left:763px;top:362px;width:2px;height:112px;background:#191919;"></div>
<div class="a" style="left:765px;top:0px;width:319px;height:474px;background:#383838;"></div>
<div class="a" style="left:765px;top:0px;width:315px;height:58px;background:#3c3c3c;"></div>
<svg style="left:772px;top:10px" width="21" height="21" viewBox="0 0 14 14"><path d="M7 0.8 L12.8 3.9 V10.1 L7 13.2 L1.2 10.1 V3.9 Z M1.2 3.9 L7 7 L12.8 3.9 M7 7 V13.2" fill="none" stroke="#c8c8c8" stroke-width="1.0" stroke-linejoin="round"/></svg>
<svg style="left:791px;top:30px" width="8" height="5" viewBox="0 0 8 5"><path d="M0 0 H8 L4.0 5 Z" fill="#c8c8c8"/></svg>
<div class="a" style="left:810px;top:10px;width:14px;height:14px;background:#2a2a2a;border-radius:3px;border:1px solid #232323"></div><svg style="left:812px;top:13px" width="10" height="8" viewBox="0 0 10 8"><path d="M1 4 L3.8 6.8 L9 1.2" fill="none" stroke="#e8e8e8" stroke-width="1.6"/></svg>
<div class="a" style="left:830px;top:8px;width:169px;height:18px;background:#2a2a2a;border-radius:3px;border:1px solid #212121"></div>
<div class="t" style="left:834px;top:8px;line-height:18px;font-size:13px;font-weight:bold;color:#d8d8d8">TPText</div>
<div class="a" style="left:1003px;top:10px;width:14px;height:14px;background:#2a2a2a;border-radius:3px;border:1px solid #232323"></div>
<div class="t" style="left:1021px;top:8px;line-height:18px;font-size:13px;color:#c8c8c8">Static</div>
<svg style="left:1066px;top:15px" width="8" height="5" viewBox="0 0 8 5"><path d="M0 0 H8 L4.0 5 Z" fill="#d0d0d0"/></svg>
<div class="t" style="left:806px;top:32px;line-height:18px;font-size:13px;color:#a8a8a8">Tag</div>
<div class="a" style="left:830px;top:33px;width:101px;height:16px;background:#515151;border-radius:3px;border:1px solid #303030"></div><div class="t" style="left:834px;top:33px;line-height:16px;font-size:12.5px;color:#d0d0d0;font-size:13px">Untagged</div><svg style="left:918px;top:39px" width="8" height="5" viewBox="0 0 8 5"><path d="M0 0 H8 L4.0 5 Z" fill="#d0d0d0"/></svg>
<div class="t" style="left:947px;top:32px;line-height:18px;font-size:13px;color:#a8a8a8">Layer</div>
<div class="a" style="left:982px;top:33px;width:93px;height:16px;background:#515151;border-radius:3px;border:1px solid #303030"></div><div class="t" style="left:986px;top:33px;line-height:16px;font-size:12.5px;color:#d0d0d0;font-size:13px">UI</div><svg style="left:1062px;top:39px" width="8" height="5" viewBox="0 0 8 5"><path d="M0 0 H8 L4.0 5 Z" fill="#d0d0d0"/></svg>
<div class="a" style="left:765px;top:58px;width:315px;height:1px;background:#242424;"></div>
<div class="a" style="left:765px;top:59px;width:315px;height:21px;background:#3e3e3e;"></div>
<svg style="left:772px;top:65px" width="7" height="8" viewBox="0 0 7 8"><path d="M0 0 V8 L7 4.0 Z" fill="#777"/></svg>
<div class="t" style="left:825px;top:59px;line-height:21px;font-size:12.5px;font-weight:bold;color:#d0d0d0">Rect Transform</div>
<svg style="left:1022px;top:64px" width="11" height="11" viewBox="0 0 11 11"><circle cx="5.5" cy="5.5" r="5.5" fill="#cfcfcf"/><path d="M3.8 4.2 A1.8 1.8 0 1 1 5.5 6 V7" fill="none" stroke="#3e3e3e" stroke-width="1.4"/><circle cx="5.5" cy="8.8" r="0.8" fill="#3e3e3e"/></svg><svg style="left:1042px;top:64px" width="11" height="11" viewBox="0 0 11 11"><path d="M0 2.5 H11 M0 8.5 H11" stroke="#cfcfcf" stroke-width="1.2"/><rect x="6" y="0" width="2" height="5" fill="#cfcfcf"/><rect x="3" y="6" width="2" height="5" fill="#cfcfcf"/></svg><div class="a" style="left:1065px;top:64px;width:2px;height:2px;background:#cfcfcf;border-radius:1px"></div><div class="a" style="left:1065px;top:68px;width:2px;height:2px;background:#cfcfcf;border-radius:1px"></div><div class="a" style="left:1065px;top:72px;width:2px;height:2px;background:#cfcfcf;border-radius:1px"></div>
<div class="a" style="left:765px;top:80px;width:315px;height:1px;background:#242424;"></div>
<div class="a" style="left:765px;top:81px;width:315px;height:21px;background:#3e3e3e;"></div>
<svg style="left:772px;top:87px" width="7" height="8" viewBox="0 0 7 8"><path d="M0 0 V8 L7 4.0 Z" fill="#777"/></svg>
<div class="t" style="left:825px;top:81px;line-height:21px;font-size:12.5px;font-weight:bold;color:#d0d0d0">Canvas Renderer</div>
<svg style="left:1022px;top:86px" width="11" height="11" viewBox="0 0 11 11"><circle cx="5.5" cy="5.5" r="5.5" fill="#cfcfcf"/><path d="M3.8 4.2 A1.8 1.8 0 1 1 5.5 6 V7" fill="none" stroke="#3e3e3e" stroke-width="1.4"/><circle cx="5.5" cy="8.8" r="0.8" fill="#3e3e3e"/></svg><svg style="left:1042px;top:86px" width="11" height="11" viewBox="0 0 11 11"><path d="M0 2.5 H11 M0 8.5 H11" stroke="#cfcfcf" stroke-width="1.2"/><rect x="6" y="0" width="2" height="5" fill="#cfcfcf"/><rect x="3" y="6" width="2" height="5" fill="#cfcfcf"/></svg><div class="a" style="left:1065px;top:86px;width:2px;height:2px;background:#cfcfcf;border-radius:1px"></div><div class="a" style="left:1065px;top:90px;width:2px;height:2px;background:#cfcfcf;border-radius:1px"></div><div class="a" style="left:1065px;top:94px;width:2px;height:2px;background:#cfcfcf;border-radius:1px"></div>
<div class="a" style="left:765px;top:102px;width:315px;height:1px;background:#242424;"></div>
<div class="a" style="left:765px;top:103px;width:315px;height:21px;background:#3e3e3e;"></div>
<svg style="left:772px;top:110px" width="8" height="7" viewBox="0 0 8 7"><path d="M0 0 H8 L4.0 7 Z" fill="#777"/></svg>
<div class="t" style="left:825px;top:103px;line-height:21px;font-size:12.5px;font-weight:bold;color:#d0d0d0">TextMeshPro - Text (UI)</div>
<svg style="left:1022px;top:108px" width="11" height="11" viewBox="0 0 11 11"><circle cx="5.5" cy="5.5" r="5.5" fill="#cfcfcf"/><path d="M3.8 4.2 A1.8 1.8 0 1 1 5.5 6 V7" fill="none" stroke="#3e3e3e" stroke-width="1.4"/><circle cx="5.5" cy="8.8" r="0.8" fill="#3e3e3e"/></svg><svg style="left:1042px;top:108px" width="11" height="11" viewBox="0 0 11 11"><path d="M0 2.5 H11 M0 8.5 H11" stroke="#cfcfcf" stroke-width="1.2"/><rect x="6" y="0" width="2" height="5" fill="#cfcfcf"/><rect x="3" y="6" width="2" height="5" fill="#cfcfcf"/></svg><div class="a" style="left:1065px;top:108px;width:2px;height:2px;background:#cfcfcf;border-radius:1px"></div><div class="a" style="left:1065px;top:112px;width:2px;height:2px;background:#cfcfcf;border-radius:1px"></div><div class="a" style="left:1065px;top:116px;width:2px;height:2px;background:#cfcfcf;border-radius:1px"></div>
<div class="a" style="left:765px;top:123px;width:315px;height:1px;background:#242424;"></div>
<svg style="left:786.5px;top:62.5px" width="13" height="13" viewBox="0 0 13 13"><g fill="#cccccc" stroke="#cccccc" stroke-width="0.8" stroke-linejoin="round"><path d="M0.8 3.6 L3.6 0.8 L5.6 5.6 Z"/><path d="M12.2 3.6 L9.4 0.8 L7.4 5.6 Z"/><path d="M0.8 9.4 L3.6 12.2 L5.6 7.4 Z"/><path d="M12.2 9.4 L9.4 12.2 L7.4 7.4 Z"/></g></svg>
<svg style="left:785px;top:84px" width="17" height="13" viewBox="0 0 17 13"><path d="M0.8 6.5 Q8.5 -2.5 16.2 6.5 Q8.5 15.5 0.8 6.5 Z" fill="none" stroke="#e0e0e0" stroke-width="1.2"/><circle cx="8.5" cy="6.5" r="2.6" fill="none" stroke="#e0e0e0" stroke-width="1.3"/></svg>
<div class="a" style="left:785px;top:105px;width:16px;height:16px;background:transparent;border:1.3px solid #1eaae6"></div>
<svg style="left:788px;top:108px" width="10" height="10" viewBox="0 0 10 10"><path d="M0.5 2.5 V0.7 H9.5 V2.5 M5 0.7 V9.3 M3 9.3 H7" fill="none" stroke="#1eaae6" stroke-width="1.4"/></svg>
<div class="a" style="left:805px;top:106px;width:14px;height:14px;background:#2a2a2a;border-radius:3px;border:1px solid #232323"></div><svg style="left:807px;top:109px" width="10" height="8" viewBox="0 0 10 8"><path d="M1 4 L3.8 6.8 L9 1.2" fill="none" stroke="#e8e8e8" stroke-width="1.6"/></svg>
<div class="a" style="left:775px;top:137px;width:300px;height:21px;background:#4a4a4a;border-radius:2px;border:1px solid #2e2e2e"></div>
<div class="t" style="left:784px;top:139px;line-height:20px;font-size:12.5px;font-weight:bold;color:#d0d0d0">Text Input</div>
<div class="t" style="left:940px;top:139px;line-height:20px;font-size:12.3px;color:#b0b0b0">Enable RTL Editor</div>
<div class="a" style="left:1050px;top:142px;width:14px;height:14px;background:#2e2e2e;border-radius:3px;border:1px solid #262626"></div>
<div class="a" style="left:784px;top:178px;width:291px;height:77px;background:#2a2a2a;border-radius:3px;border:1px solid #212121"></div>
<div class="t" style="left:786px;top:180px;line-height:16px;font-size:13px;color:#d0d0d0">100&lt;size=60%&gt;&lt;color=#222&gt;/100&lt;/color&gt;&lt;/size</div>
<div class="t" style="left:786px;top:195px;line-height:16px;font-size:13px;color:#d0d0d0">&gt;</div>
<div class="t" style="left:784px;top:259px;line-height:16px;font-size:12.5px;color:#c4c4c4">Text Style</div>
<div class="a" style="left:906px;top:259px;width:169px;height:16px;background:#515151;border-radius:3px;border:1px solid #303030"></div><div class="t" style="left:910px;top:259px;line-height:16px;font-size:12.5px;color:#d0d0d0;">Normal</div><svg style="left:1062px;top:265px" width="8" height="5" viewBox="0 0 8 5"><path d="M0 0 H8 L4.0 5 Z" fill="#d0d0d0"/></svg>
<div class="a" style="left:775px;top:277px;width:300px;height:21px;background:#4a4a4a;border-radius:2px;border:1px solid #2e2e2e"></div>
<div class="t" style="left:784px;top:280px;line-height:20px;font-size:12.5px;font-weight:bold;color:#d0d0d0">Main Settings</div>
<div class="t" style="left:784px;top:302px;line-height:16px;font-size:12.5px;color:#c4c4c4">Font Asset</div>
<div class="a" style="left:906px;top:302px;width:169px;height:17px;background:#2a2a2a;border-radius:3px;border:1px solid #212121"></div>
<div class="a" style="left:907px;top:303px;width:13px;height:14px;background:transparent;border:1.2px solid #1eaae6"></div>
<div class="t" style="left:909px;top:303px;line-height:14px;font-size:11px;color:#1eaae6;font-family:'Liberation Serif',serif">F</div>
<div class="t" style="left:921px;top:302px;line-height:17px;font-size:12.5px;color:#d0d0d0;width:137px;overflow:hidden">NotoSans_BlackShadow</div>
<svg style="left:1060px;top:305px" width="11" height="11" viewBox="0 0 11 11"><circle cx="5.5" cy="5.5" r="4.8" fill="none" stroke="#d0d0d0" stroke-width="1.2"/><circle cx="5.5" cy="5.5" r="1.8" fill="#d0d0d0"/></svg>
<div class="t" style="left:784px;top:322px;line-height:16px;font-size:12.5px;color:#c4c4c4">Material Preset</div>
<div class="a" style="left:906px;top:323px;width:169px;height:14px;background:#515151;border-radius:3px;border:1px solid #303030"></div>
<div class="t" style="left:909px;top:322px;line-height:16px;font-size:12px;color:#d0d0d0;width:153px;overflow:hidden">NotoSans_BlackShadow_HPT</div>
<svg style="left:1064px;top:328px" width="8" height="5" viewBox="0 0 8 5"><path d="M0 0 H8 L4.0 5 Z" fill="#d0d0d0"/></svg>
<div class="t" style="left:784px;top:341px;line-height:16px;font-size:12.5px;color:#c4c4c4">Font Style</div>
<div class="a" style="left:905px;top:341px;width:39px;height:16px;background:#555;border-radius:2px;border:1px solid #303030"></div>
<div class="t" style="left:905px;top:341px;line-height:16px;font-size:12.5px;color:#d0d0d0;width:39px;text-align:center">B</div>
<div class="a" style="left:945px;top:341px;width:42px;height:16px;background:#555;border-radius:2px;border:1px solid #303030"></div>
<div class="t" style="left:945px;top:341px;line-height:16px;font-size:12.5px;color:#d0d0d0;width:42px;text-align:center">I</div>
<div class="a" style="left:988px;top:341px;width:43px;height:16px;background:#555;border-radius:2px;border:1px solid #303030"></div>
<div class="t" style="left:988px;top:341px;line-height:16px;font-size:12.5px;color:#d0d0d0;width:43px;text-align:center">U</div>
<div class="a" style="left:1032px;top:341px;width:43px;height:16px;background:#555;border-radius:2px;border:1px solid #303030"></div>
<div class="t" style="left:1032px;top:341px;line-height:16px;font-size:12.5px;color:#d0d0d0;width:43px;text-align:center">S</div>
<div class="a" style="left:905px;top:363px;width:39px;height:16px;background:#555;border-radius:2px;border:1px solid #303030"></div>
<div class="t" style="left:905px;top:363px;line-height:16px;font-size:12.5px;color:#d0d0d0;width:39px;text-align:center">ab</div>
<div class="a" style="left:945px;top:363px;width:42px;height:16px;background:#555;border-radius:2px;border:1px solid #303030"></div>
<div class="t" style="left:945px;top:363px;line-height:16px;font-size:12.5px;color:#d0d0d0;width:42px;text-align:center">AB</div>
<div class="a" style="left:988px;top:363px;width:43px;height:16px;background:#555;border-radius:2px;border:1px solid #303030"></div>
<div class="t" style="left:988px;top:363px;line-height:16px;font-size:12.5px;color:#d0d0d0;width:43px;text-align:center">SC</div>
<div class="t" style="left:784px;top:386px;line-height:16px;font-size:12.5px;color:#6c6c6c">Font Size</div>
<div class="a" style="left:906px;top:384px;width:46px;height:17px;background:#2e2e2e;border-radius:3px;border:1px solid #212121"></div>
<div class="t" style="left:909px;top:385px;line-height:17px;font-size:12.5px;color:#6a6a6a">26</div>
<div class="t" style="left:799px;top:406px;line-height:16px;font-size:12.5px;color:#c4c4c4">Auto Size</div>
<div class="a" style="left:906px;top:407px;width:13px;height:13px;background:#2a2a2a;border-radius:3px;border:1px solid #232323"></div><svg style="left:908px;top:410px" width="10" height="8" viewBox="0 0 10 8"><path d="M1 4 L3.8 6.8 L9 1.2" fill="none" stroke="#e8e8e8" stroke-width="1.6"/></svg>
<div class="t" style="left:799px;top:426px;line-height:17px;font-size:12.5px;color:#c4c4c4">Auto Size Options</div>
<div class="t" style="left:903px;top:426px;line-height:17px;font-size:12.5px;color:#c4c4c4">Min</div>
<div class="a" style="left:929px;top:424px;width:17px;height:17px;background:#2a2a2a;border-radius:3px;border:1px solid #212121"></div>
<div class="t" style="left:931px;top:426px;line-height:17px;font-size:12.5px;color:#d0d0d0;width:14px;overflow:hidden">10</div>
<div class="t" style="left:948px;top:426px;line-height:17px;font-size:12.5px;color:#c4c4c4">Max</div>
<div class="a" style="left:975px;top:424px;width:13px;height:17px;background:#2a2a2a;border-radius:3px;border:1px solid #212121"></div>
<div class="t" style="left:978px;top:426px;line-height:17px;font-size:12.5px;color:#d0d0d0">2</div>
<div class="t" style="left:991px;top:426px;line-height:17px;font-size:12.5px;color:#c4c4c4">WD%</div>
<div class="a" style="left:1027px;top:424px;width:4px;height:17px;background:#2a2a2a;border-radius:3px;border:1px solid #212121"></div>
<div class="t" style="left:1033px;top:426px;line-height:17px;font-size:12.5px;color:#c4c4c4">Line</div>
<div class="a" style="left:1063px;top:424px;width:12px;height:17px;background:#2a2a2a;border-radius:3px;border:1px solid #212121"></div>
<div class="t" style="left:1065px;top:426px;line-height:17px;font-size:12.5px;color:#d0d0d0">0</div>
<div class="t" style="left:784px;top:454px;line-height:17px;font-size:12.5px;color:#c4c4c4">Vertex Color</div>
<div class="a" style="left:906px;top:453px;width:151px;height:16px;background:#0050e6;border-radius:2px 0 0 2px"></div>
<div class="a" style="left:906px;top:466px;width:151px;height:3px;background:#ffffff;"></div>
<div class="a" style="left:1057px;top:453px;width:18px;height:17px;background:#3e3e3e;border-radius:0 2px 2px 0;border:1px solid #303030"></div>
<svg style="left:1061px;top:456px" width="11" height="11" viewBox="0 0 11 11"><path d="M1 10 L7 4" stroke="#d0d0d0" stroke-width="1.5"/><path d="M6 2 L9 5 L10.5 3.5 A1.5 1.5 0 0 0 7.5 0.5 Z" fill="#d0d0d0"/></svg>
<div class="a" style="left:1080px;top:0px;width:2px;height:474px;background:#2a2a2a;"></div>
<div class="a" style="left:1082px;top:0px;width:2px;height:474px;background:#383838;"></div>
<div class="a" style="left:1082px;top:18px;width:2px;height:456px;background:#5e5e5e;"></div>
</body></html>
